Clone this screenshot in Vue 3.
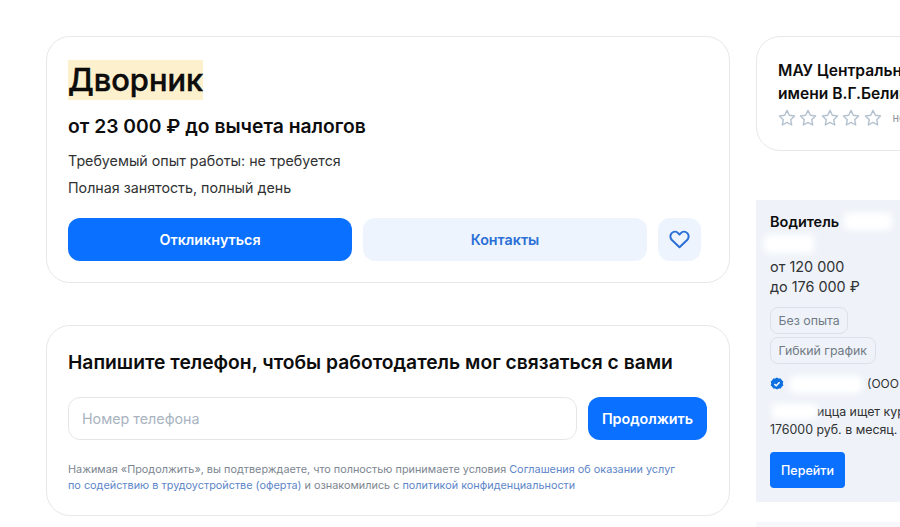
<script setup>
const stars = [1, 2, 3, 4, 5]
</script>

<template>
  <div class="page">
    <main class="main">
      <section class="card vacancy">
        <h1 class="title"><span class="mark">Дворник</span></h1>
        <p class="salary">от 23 000 ₽ до вычета налогов</p>
        <p class="info first">Требуемый опыт работы: не требуется</p>
        <p class="info second">Полная занятость, полный день</p>
        <div class="actions">
          <button class="btn primary">Откликнуться</button>
          <button class="btn soft">Контакты</button>
          <button class="btn fav" aria-label="В избранное">
            <svg width="21" height="19" viewBox="0 0 22 20" fill="none">
              <path d="M11 18.2 3 10.6C.9 8.5.9 5.2 2.8 3.3c2-1.9 5.1-1.8 7 .2l1.2 1.3 1.2-1.3c1.900-2 5-2.100 7-.2 1.900 1.900 1.900 5.200-.2 7.300L11 18.200Z" stroke="#2b6fd6" stroke-width="2.100" stroke-linejoin="round"/>
            </svg>
          </button>
        </div>
      </section>

      <section class="card phone">
        <h2 class="phone-title">Напишите телефон, чтобы работодатель мог связаться с вами</h2>
        <div class="phone-row">
          <input class="phone-input" placeholder="Номер телефона" />
          <button class="btn primary next">Продолжить</button>
        </div>
        <p class="legal">
          Нажимая «Продолжить», вы подтверждаете, что полностью принимаете условия
          <a>Соглашения об оказании услуг</a><br />
          <a>по содействию в трудоустройстве (оферта)</a>
          и ознакомились с <a>политикой конфиденциальности</a>
        </p>
      </section>
    </main>

    <aside class="side">
      <section class="employer">
        <p class="employer-name">МАУ Центральная библиотека<br />имени В.Г.Белинского</p>
        <div class="rating">
          <svg v-for="s in stars" :key="s" class="star" width="18" height="17" viewBox="0 0 18 17" fill="none">
            <path d="M9 1.400l2.300 4.900 5.300.7-3.900 3.700 1 5.300L9 13.400l-4.700 2.600 1-5.300L1.400 7l5.300-.7L9 1.400Z" stroke="#b4c2cf" stroke-width="1.400" stroke-linejoin="round"/>
          </svg>
          <span class="rating-text">нет отзывов</span>
        </div>
      </section>

      <section class="ad">
        <div class="ad-title-wrap">
          <p class="ad-title">Водитель</p>
          <span class="smudge s1"></span>
          <span class="smudge s2"></span>
        </div>
        <p class="ad-pay">от 120 000<br />до 176 000 ₽</p>
        <div class="tags">
          <span class="tag">Без опыта</span>
          <span class="tag">Гибкий график</span>
        </div>
        <div class="company">
          <svg width="14" height="14" viewBox="0 0 14 14">
            <path d="M7 .6l1.800 1 2-.2 1 1.800 1.500 1.300-.5 2 .5 2-1.500 1.300-1 1.800-2-.2-1.800 1-1.800-1-2 .2-1-1.800L.7 8.500l.5-2-.5-2 1.500-1.300 1-1.800 2 .2L7 .6Z" fill="#0e6fe0"/>
            <path d="M4.400 7l1.800 1.800 3.400-3.500" stroke="#fff" stroke-width="1.500" fill="none"/>
          </svg>
          <span class="company-name">(ООО «Транспорт»)</span>
          <span class="smudge s3"></span>
        </div>
        <p class="ad-text">
          <span class="smudge s4"></span>
          <span class="indent">ицца ищет курьеров, доход до</span><br />176000 руб. в месяц.
        </p>
        <button class="go">Перейти</button>
      </section>
      <div class="ad-next"></div>
    </aside>
  </div>
</template>

<style>
html, body { margin: 0; background: #fff; overflow: hidden; }
</style>

<style scoped>
.page {
  display: flex;
  gap: 26px;
  width: 900px;
  height: 527px;
  padding: 36px 0 0 46px;
  box-sizing: border-box;
  overflow: hidden;
  font-family: Inter, "Liberation Sans", sans-serif;
  color: #0d0d0d;
}
.main { display: flex; flex-direction: column; gap: 42px; width: 684px; flex: none; }
.card {
  box-sizing: border-box;
  border: 1px solid #e6e8ea;
  border-radius: 24px;
  background: #fff;
  padding: 0 21px;
}
p, h1, h2 { margin: 0; }
.vacancy { height: 247px; padding-top: 23px; }
.title { font-size: 30.800px; line-height: 40px; font-weight: 500; -webkit-text-stroke: 0.45px #000; }
.mark { display: inline-block; background: #fdf0cd; height: 40px; }
.salary { margin-top: 14px; font-size: 19.300px; line-height: 24px; font-weight: 600; white-space: nowrap; }
.info { font-size: 14.250px; line-height: 20px; color: #303233; }
.first { margin-top: 13px; }
.second { margin-top: 7px; }
.actions { display: flex; gap: 11px; margin-top: 20px; }
.btn {
  border: 0;
  border-radius: 12px;
  height: 43px;
  font: 600 14.300px Inter, "Liberation Sans", sans-serif;
}
.primary { background: #0a70ff; color: #fff; }
.vacancy .primary, .soft { width: 284px; }
.soft { background: #edf4fd; color: #2b6fd6; }
.fav { width: 43px; background: #edf4fd; display: flex; align-items: center; justify-content: center; padding: 0; }
.phone { height: 191px; padding-top: 24px; }
.phone-title { font-size: 19.250px; line-height: 24px; font-weight: 600; white-space: nowrap; }
.phone-row { display: flex; gap: 11px; margin-top: 23px; }
.phone-input {
  box-sizing: border-box;
  width: 509px;
  height: 43px;
  padding: 0 13px;
  border: 1px solid #e4e7ea;
  border-radius: 12px;
  outline: none;
  font: 400 14.300px Inter, "Liberation Sans", sans-serif;
}
.phone-input::placeholder { color: #a9b4bf; opacity: 1; }
.next { width: 119px; }
.legal { margin-top: 21px; font-size: 10.850px; line-height: 16px; color: #7d8690; white-space: nowrap; }
.legal a { color: #5d86c9; }
.side { width: 260px; flex: none; }
.employer {
  box-sizing: border-box;
  height: 115px;
  border: 1px solid #e6e8ea;
  border-radius: 24px;
  padding: 22px 21px 0;
}
.employer-name { font-size: 15.600px; line-height: 23px; font-weight: 600; white-space: nowrap; }
.rating { display: flex; align-items: center; gap: 3.400px; margin-top: 4px; }
.rating-text { margin-left: 7.500px; font-size: 11px; color: #8b949c; white-space: nowrap; }
.ad {
  box-sizing: border-box;
  height: 302px;
  margin-top: 49px;
  padding: 13px 14px 0;
  background: #eff3f9;
  position: relative;
}
.ad-title-wrap { height: 41px; }
.ad-title { font-size: 14.500px; line-height: 18px; font-weight: 600; }
.smudge { position: absolute; background: #fff; filter: blur(3px); border-radius: 5px; }
.s1 { left: 88px; top: 13px; width: 48px; height: 17px; }
.s2 { left: 8px; top: 35px; width: 50px; height: 18px; }
.s3 { left: 34px; top: 176px; width: 72px; height: 17px; }
.s4 { left: 16px; top: 204px; width: 46px; height: 15px; }
.ad-pay { margin-top: 3px; font-size: 14.400px; line-height: 20px; color: #303233; }
.tags { display: flex; flex-direction: column; align-items: flex-start; gap: 3px; margin-top: 10px; }
.tag {
  box-sizing: border-box;
  height: 27px;
  padding: 0 7.500px;
  line-height: 25px;
  border: 1px solid #dbe1e8;
  border-radius: 8px;
  font-size: 12.350px;
  color: #6f7a85;
}
.company { display: flex; align-items: center; gap: 0; margin-top: 12px; font-size: 12px; line-height: 16px; color: #303233; white-space: nowrap; }
.company-name { margin-left: 6px; padding-left: 77px; color: #303233; }
.ad-text { margin-top: 11px; font-size: 12.400px; line-height: 18px; color: #303233; white-space: nowrap; }
.indent { padding-left: 47px; }
.go {
  display: block;
  width: 75px;
  height: 36px;
  margin-top: 13px;
  border: 0;
  border-radius: 4px;
  background: #0a70ff;
  color: #fff;
  font: 500 12.500px Inter, "Liberation Sans", sans-serif;
}
.ad-next { height: 6px; margin-top: 20px; background: #f7f7fb; }
</style>
